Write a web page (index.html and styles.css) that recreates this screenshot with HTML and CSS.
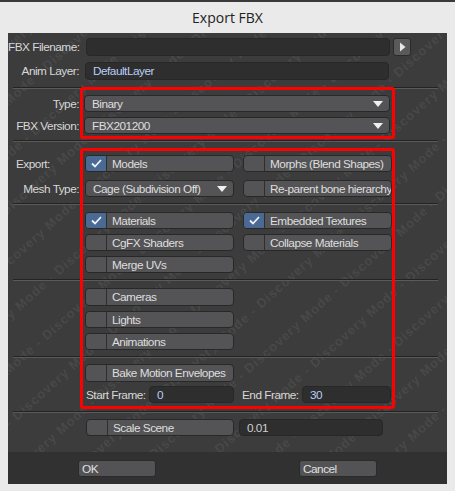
FILE: index.html
```html
<!DOCTYPE html>
<html>
<head>
<meta charset="utf-8">
<link rel="stylesheet" href="styles.css">
</head>
<body>
<div class="topstrip"></div>
<div class="title">Export FBX</div>
<div class="panel">
  <div class="watermark" aria-hidden="true">
    <div class="wm-inner">
      <div class="wm-line">Discovery Mode - Discovery Mode - Discovery Mode - Discovery Mode - Discovery Mode - Discovery Mode - Discovery Mode - Discovery Mode -</div>
      <div class="wm-line">Mode - Discovery Mode - Discovery Mode - Discovery Mode - Discovery Mode - Discovery Mode - Discovery Mode - Discovery Mode -</div>
      <div class="wm-line">Discovery Mode - Discovery Mode - Discovery Mode - Discovery Mode - Discovery Mode - Discovery Mode - Discovery Mode - Discovery Mode -</div>
      <div class="wm-line">Mode - Discovery Mode - Discovery Mode - Discovery Mode - Discovery Mode - Discovery Mode - Discovery Mode - Discovery Mode -</div>
      <div class="wm-line">Discovery Mode - Discovery Mode - Discovery Mode - Discovery Mode - Discovery Mode - Discovery Mode - Discovery Mode - Discovery Mode -</div>
      <div class="wm-line">Mode - Discovery Mode - Discovery Mode - Discovery Mode - Discovery Mode - Discovery Mode - Discovery Mode - Discovery Mode -</div>
      <div class="wm-line">Discovery Mode - Discovery Mode - Discovery Mode - Discovery Mode - Discovery Mode - Discovery Mode - Discovery Mode - Discovery Mode -</div>
      <div class="wm-line">Mode - Discovery Mode - Discovery Mode - Discovery Mode - Discovery Mode - Discovery Mode - Discovery Mode - Discovery Mode -</div>
      <div class="wm-line">Discovery Mode - Discovery Mode - Discovery Mode - Discovery Mode - Discovery Mode - Discovery Mode - Discovery Mode - Discovery Mode -</div>
      <div class="wm-line">Mode - Discovery Mode - Discovery Mode - Discovery Mode - Discovery Mode - Discovery Mode - Discovery Mode - Discovery Mode -</div>
      <div class="wm-line">Discovery Mode - Discovery Mode - Discovery Mode - Discovery Mode - Discovery Mode - Discovery Mode - Discovery Mode - Discovery Mode -</div>
      <div class="wm-line">Mode - Discovery Mode - Discovery Mode - Discovery Mode - Discovery Mode - Discovery Mode - Discovery Mode - Discovery Mode -</div>
      <div class="wm-line">Discovery Mode - Discovery Mode - Discovery Mode - Discovery Mode - Discovery Mode - Discovery Mode - Discovery Mode - Discovery Mode -</div>
      <div class="wm-line">Mode - Discovery Mode - Discovery Mode - Discovery Mode - Discovery Mode - Discovery Mode - Discovery Mode - Discovery Mode -</div>
      <div class="wm-line">Discovery Mode - Discovery Mode - Discovery Mode - Discovery Mode - Discovery Mode - Discovery Mode - Discovery Mode - Discovery Mode -</div>
      <div class="wm-line">Mode - Discovery Mode - Discovery Mode - Discovery Mode - Discovery Mode - Discovery Mode - Discovery Mode - Discovery Mode -</div>
      <div class="wm-line">Discovery Mode - Discovery Mode - Discovery Mode - Discovery Mode - Discovery Mode - Discovery Mode - Discovery Mode - Discovery Mode -</div>
      <div class="wm-line">Mode - Discovery Mode - Discovery Mode - Discovery Mode - Discovery Mode - Discovery Mode - Discovery Mode - Discovery Mode -</div>
      <div class="wm-line">Discovery Mode - Discovery Mode - Discovery Mode - Discovery Mode - Discovery Mode - Discovery Mode - Discovery Mode - Discovery Mode -</div>
      <div class="wm-line">Mode - Discovery Mode - Discovery Mode - Discovery Mode - Discovery Mode - Discovery Mode - Discovery Mode - Discovery Mode -</div>
    </div>
  </div>

  <div class="main">
    <div class="row r1 tall">
      <div class="lbl">FBX Filename:</div>
      <div class="field fname"></div>
      <div class="browse"><svg width="7" height="10" viewBox="0 0 7 10"><path d="M1 0.5 L6.5 5 L1 9.5 Z" fill="#e8e8e8"/></svg></div>
    </div>
    <div class="row r2 tall">
      <div class="lbl">Anim Layer:</div>
      <div class="field full blue">DefaultLayer</div>
    </div>
    <div class="sep s1"></div>

    <div class="row r3">
      <div class="lbl">Type:</div>
      <div class="btn drop full"><span>Binary</span><svg class="tri" width="10" height="6" viewBox="0 0 10 6"><path d="M0 0 H10 L5 6 Z" fill="#f0f0f0"/></svg></div>
    </div>
    <div class="row r4">
      <div class="lbl">FBX Version:</div>
      <div class="btn drop full"><span>FBX201200</span><svg class="tri" width="10" height="6" viewBox="0 0 10 6"><path d="M0 0 H10 L5 6 Z" fill="#f0f0f0"/></svg></div>
    </div>
    <div class="sep s2"></div>

    <div class="row r5">
      <div class="lbl left">Export:</div>
      <div class="cols">
        <div class="btn chk on"><span class="box"><svg width="11" height="9" viewBox="0 0 11 9"><path d="M1 4.5 L4 7.5 L10 1" fill="none" stroke="#eef2f8" stroke-width="1.8"/></svg></span><span class="txt">Models</span></div>
        <div class="btn chk"><span class="box"></span><span class="txt">Morphs (Blend Shapes)</span></div>
      </div>
    </div>
    <div class="row r6">
      <div class="lbl">Mesh Type:</div>
      <div class="cols">
        <div class="btn drop"><span>Cage (Subdivision Off)</span><svg class="tri" width="10" height="6" viewBox="0 0 10 6"><path d="M0 0 H10 L5 6 Z" fill="#f0f0f0"/></svg></div>
        <div class="btn chk"><span class="box"></span><span class="txt">Re-parent bone hierarchy</span></div>
      </div>
    </div>
    <div class="sep s3"></div>

    <div class="row r7">
      <div class="lbl"></div>
      <div class="cols">
        <div class="btn chk on"><span class="box"><svg width="11" height="9" viewBox="0 0 11 9"><path d="M1 4.5 L4 7.5 L10 1" fill="none" stroke="#eef2f8" stroke-width="1.8"/></svg></span><span class="txt">Materials</span></div>
        <div class="btn chk on"><span class="box"><svg width="11" height="9" viewBox="0 0 11 9"><path d="M1 4.5 L4 7.5 L10 1" fill="none" stroke="#eef2f8" stroke-width="1.8"/></svg></span><span class="txt">Embedded Textures</span></div>
      </div>
    </div>
    <div class="row r8">
      <div class="lbl"></div>
      <div class="cols">
        <div class="btn chk"><span class="box"></span><span class="txt">CgFX Shaders</span></div>
        <div class="btn chk"><span class="box"></span><span class="txt">Collapse Materials</span></div>
      </div>
    </div>
    <div class="row r9">
      <div class="lbl"></div>
      <div class="cols">
        <div class="btn chk"><span class="box"></span><span class="txt">Merge UVs</span></div>
      </div>
    </div>
    <div class="sep s4"></div>

    <div class="row r10">
      <div class="lbl"></div>
      <div class="cols">
        <div class="btn chk"><span class="box"></span><span class="txt">Cameras</span></div>
      </div>
    </div>
    <div class="row r11">
      <div class="lbl"></div>
      <div class="cols">
        <div class="btn chk"><span class="box"></span><span class="txt">Lights</span></div>
      </div>
    </div>
    <div class="row r12">
      <div class="lbl"></div>
      <div class="cols">
        <div class="btn chk"><span class="box"></span><span class="txt">Animations</span></div>
      </div>
    </div>
    <div class="sep s5"></div>

    <div class="row r13">
      <div class="lbl"></div>
      <div class="cols">
        <div class="btn chk"><span class="box"></span><span class="txt">Bake Motion Envelopes</span></div>
      </div>
    </div>
    <div class="row r14">
      <div class="lbl"></div>
      <div class="cols">
        <div class="pair start"><span class="plbl">Start Frame:</span><div class="field blue">0</div></div>
        <div class="pair end"><span class="plbl">End Frame:</span><div class="field blue">30</div></div>
      </div>
    </div>
    <div class="sep s6"></div>

    <div class="row r15">
      <div class="lbl"></div>
      <div class="scale">
        <div class="btn chk"><span class="box"></span><span class="txt">Scale Scene</span></div>
        <div class="field scalev">0.01</div>
      </div>
    </div>
  </div>

  <div class="footer">
    <div class="fbtn ok">OK</div>
    <div class="fbtn cancel">Cancel</div>
  </div>

  <div class="hl hl1"></div>
  <div class="hl hl2"></div>
</div>
</body>
</html>
```

FILE: styles.css
```css
html, body {
  margin: 0;
  padding: 0;
}
body {
  width: 455px;
  height: 491px;
  background: #eaeaea;
  font-family: "Liberation Sans", Arial, sans-serif;
  font-size: 11.8px;
  letter-spacing: -0.5px;
  color: #d8d8d8;
  overflow: hidden;
}
.topstrip {
  height: 2px;
  background: #3a3a3a;
}
.title {
  height: 31px;
  line-height: 31px;
  text-align: center;
  font-family: "Open Sans", "Noto Sans", sans-serif;
  font-size: 14px;
  letter-spacing: 0;
  color: #222;
}
.panel {
  position: relative;
  margin: 0 8px;
  width: 439px;
  overflow: hidden;
}
.watermark {
  position: absolute;
  left: 0;
  top: 0;
  width: 439px;
  height: 419px;
  overflow: hidden;
  background: #3c3c3c;
}
.wm-inner {
  position: absolute;
  left: -230px;
  top: -180px;
  width: 900px;
  transform: rotate(-42deg);
  transform-origin: 50% 50%;
}
.wm-line {
  white-space: nowrap;
  font-family: "Liberation Sans", Arial, sans-serif;
  font-weight: bold;
  font-size: 13px;
  line-height: 40px;
  letter-spacing: 1px;
  color: rgba(255, 255, 255, 0.075);
}
.main {
  position: relative;
  padding: 5px 0 16px;
}
.row {
  display: flex;
  align-items: center;
  height: 17px;
}
.row.tall { height: 18px; }
.r2 { margin-top: 6px; }
.r3 { margin-top: 6px; }
.r4 { margin-top: 5px; }
.r5 { margin-top: 13px; }
.r6 { margin-top: 8px; }
.r7 { margin-top: 7px; }
.r8 { margin-top: 5px; }
.r9 { margin-top: 5px; }
.r10 { margin-top: 7px; height: 18px; }
.r11 { margin-top: 5px; }
.r12 { margin-top: 5px; }
.r13 { margin-top: 6px; height: 18px; }
.r14 { margin-top: 4px; }
.r15 { margin-top: 6px; }

.sep {
  margin: 0 9px 0 5px;
  height: 1px;
  border-top: 1px solid #232323;
  background: #5a5a5a;
}
.s1 { margin-top: 7px; }
.s2 { margin-top: 6px; }
.s3 { margin-top: 6px; }
.s4 { margin-top: 6px; }
.s5 { margin-top: 6px; }
.s6 { margin-top: 8px; }

.lbl {
  flex: none;
  width: 77px;
  box-sizing: border-box;
  padding-right: 6px;
  text-align: right;
  white-space: nowrap;
}
.lbl.left {
  text-align: left;
  padding-left: 8px;
}

.field {
  box-sizing: border-box;
  height: 100%;
  background: #2e2e2e;
  border: 1px solid #272727;
  border-radius: 4px;
  padding-left: 7px;
  display: flex;
  align-items: center;
  color: #cfcfcf;
}
.field.blue { color: #b9cdf4; }
.fname { width: 304px; margin-left: 1px; }
.field.full { width: 304px; }
.browse {
  margin-left: 3px;
  width: 18px;
  height: 18px;
  box-sizing: border-box;
  background: #5a5a5c;
  border: 1px solid #2a2a2a;
  border-radius: 3px;
  display: flex;
  align-items: center;
  justify-content: center;
}

.btn {
  box-sizing: border-box;
  height: 100%;
  background: #545456;
  border: 1px solid #282828;
  border-radius: 4px;
  display: flex;
  align-items: center;
  color: #dedede;
  white-space: nowrap;
  overflow: hidden;
}
.drop {
  padding-left: 7px;
  justify-content: space-between;
  padding-right: 6px;
}
.drop.full { width: 306px; margin-left: -1px; }
.tri { flex: none; }

.cols {
  display: flex;
  gap: 9px;
  height: 100%;
}
.cols > * { width: 149px; }

.chk .box {
  flex: none;
  width: 21px;
  height: 100%;
  box-sizing: border-box;
  border-right: 1px solid #2e2e2e;
  display: flex;
  align-items: center;
  justify-content: center;
}
.chk.on .box { background: #4a6a94; }
.chk .txt { padding-left: 5px; }

.pair {
  display: flex;
  align-items: center;
  height: 100%;
}
.pair .plbl { white-space: nowrap; flex: none; }
.start .plbl { width: 63px; padding-left: 1px; }
.start .field { width: 86px; }
.end { margin-left: -1px; }
.end .plbl { width: 60px; }
.end .field { width: 90px; }

.scale {
  display: flex;
  height: 100%;
  gap: 5px;
}
.scale .btn { width: 148px; margin-left: 1px; }
.scalev { width: 144px; }

.footer {
  position: relative;
  height: 32px;
  box-sizing: border-box;
  background: #313131;
  padding-top: 8px;
  display: flex;
}
.fbtn {
  box-sizing: border-box;
  width: 78px;
  height: 17px;
  background: #535355;
  border: 1px solid #2a2a2a;
  border-radius: 3px;
  padding-left: 3px;
  display: flex;
  align-items: center;
  color: #e0e0e0;
}
.ok { margin-left: 70px; }
.cancel { margin-left: 143px; }

.hl {
  position: absolute;
  left: 72px;
  width: 315px;
  box-sizing: border-box;
  border: 3px solid #ff0000;
  border-radius: 3px;
}
.hl1 { top: 54px; height: 52px; }
.hl2 { top: 115px; height: 261px; }
```
